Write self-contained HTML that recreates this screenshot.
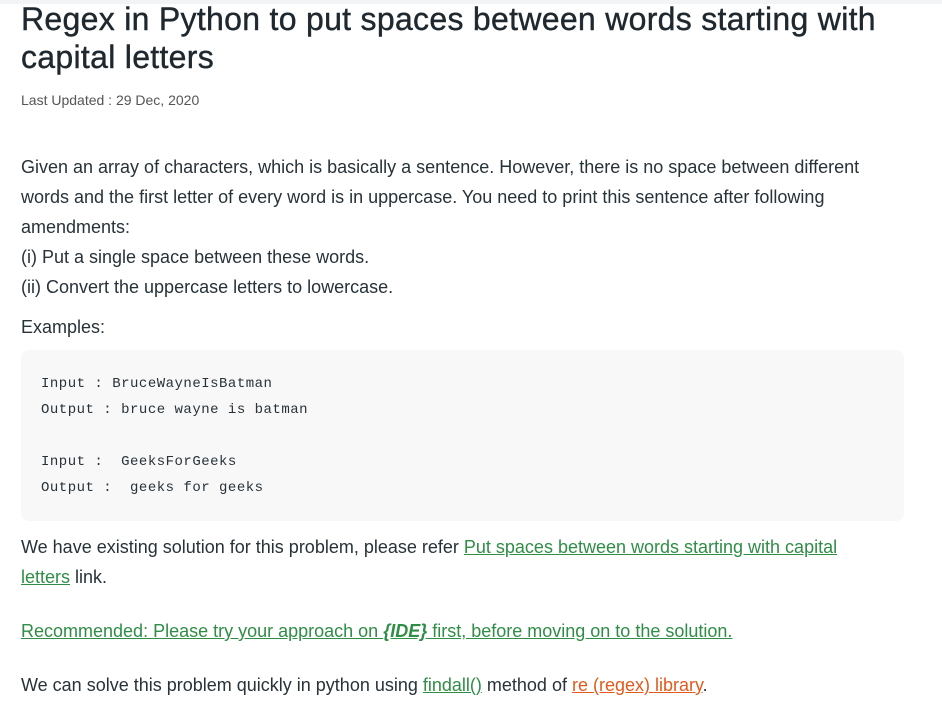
<!DOCTYPE html>
<html><head><meta charset="utf-8"><style>
body{margin:0;background:#fff;width:942px;height:707px;overflow:hidden;font-family:"Liberation Sans",sans-serif;color:#273239}
.top{position:absolute;left:0;top:0;width:942px;height:4px;background:#f3f4f5}
h1{position:absolute;left:21px;top:0px;margin:0;font-size:32px;font-weight:normal;line-height:38px;width:930px;white-space:nowrap;letter-spacing:0.3px;color:#1e282e;-webkit-text-stroke:0.4px #1e282e}
.date{position:absolute;left:21px;top:92px;font-size:14px;color:#555}
.p{position:absolute;left:21px;font-size:18px;line-height:30px;color:#273239;width:920px;white-space:nowrap}
pre{position:absolute;left:21px;top:350px;width:883px;height:171px;margin:0;background:#f8f8f8;border-radius:8px;font-family:"Liberation Mono",monospace;font-size:14px;line-height:26px;padding:0;color:#273239}
pre span{position:absolute;left:20px;white-space:pre;letter-spacing:0.5px}
a{color:#2f8d46;text-decoration:underline}
a.o{color:#e25a1c}
</style></head><body>
<div class="top"></div>
<h1>Regex in Python to put spaces between words starting with<br>capital letters</h1>
<div class="date">Last Updated : 29 Dec, 2020</div>
<div class="p" style="top:152px">Given an array of characters, which is basically a sentence. However, there is no space between different<br>words and the first letter of every word is in uppercase. You need to print this sentence after following<br>amendments:<br>(i) Put a single space between these words.<br>(ii) Convert the uppercase letters to lowercase.</div>
<div class="p" style="top:312px">Examples:</div>
<pre><span style="top:21px">Input : BruceWayneIsBatman</span><span style="top:47px">Output : bruce wayne is batman</span><span style="top:99px">Input :  GeeksForGeeks</span><span style="top:125px">Output :  geeks for geeks</span></pre>
<div class="p" style="top:532px">We have existing solution for this problem, please refer <a>Put spaces between words starting with capital</a><br><a>letters</a> link.</div>
<div class="p" style="top:616px"><a>Recommended: Please try your approach on <b><i>{IDE}</i></b> first, before moving on to the solution.</a></div>
<div class="p" style="top:670px">We can solve this problem quickly in python using <a>findall()</a> method of <a class="o">re (regex) library</a>.</div>
</body></html>
